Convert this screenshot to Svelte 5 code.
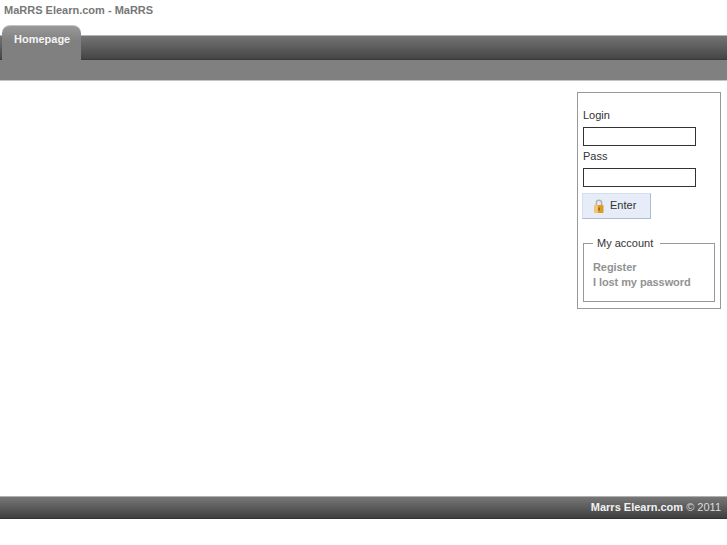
<script>
  const links = ['Register', 'I lost my password'];
</script>

<div class="page">
  <h1 class="title">MaRRS Elearn.com - MaRRS</h1>

  <nav class="menu">
    <a class="tab" href="#home">Homepage</a>
  </nav>
  <div class="subbar"></div>

  <main class="content">
    <aside class="side">
      <form class="login">
        <label for="login">Login</label>
        <input id="login" type="text" />
        <label for="pass">Pass</label>
        <input id="pass" type="password" />
        <button type="button" class="enter">
          <svg width="10" height="14" viewBox="0 0 10 14" aria-hidden="true">
            <path d="M2.4 6.5V3.8a2.6 2.6 0 0 1 5.2 0v2.7" fill="none" stroke="#b5b2a4" stroke-width="1.5" />
            <rect x="0.5" y="6" width="9" height="8" rx="0.8" fill="#dd9a2c" />
            <rect x="0.5" y="6" width="3.5" height="8" rx="0.8" fill="#f2c768" />
            <rect x="4.4" y="8.5" width="1.4" height="3" fill="#8d5c12" />
          </svg>
          <span>Enter</span>
        </button>
      </form>

      <fieldset class="account">
        <legend>My account</legend>
        {#each links as link}
          <a href="#{link}">{link}</a>
        {/each}
      </fieldset>
    </aside>
  </main>

  <footer class="foot"><b>Marrs Elearn.com</b> © 2011</footer>
</div>

<style>
  :global(body) {
    margin: 0;
    background: #fff;
  }

  .page {
    width: 727px;
    height: 545px;
    overflow: hidden;
    font-family: "Liberation Sans", Arial, sans-serif;
    font-size: 11px;
    color: #333;
  }

  .title {
    margin: 0;
    height: 25px;
    padding: 4px 0 0 4px;
    box-sizing: border-box;
    font-size: 11px;
    line-height: 13px;
    font-weight: bold;
    color: #777;
  }

  .menu {
    height: 35px;
    padding-left: 2px;
    box-sizing: border-box;
    background: linear-gradient(#fff 0, #fff 10px, #b4b4b4 10px, #b4b4b4 11px, #747474 11px, #454545 34px, #3a3a3a 34px);
  }

  .tab {
    display: block;
    width: 79px;
    height: 35px;
    box-sizing: border-box;
    padding: 7px 0 0 12px;
    border-radius: 8px 8px 0 0;
    border-top: 1px solid #c4c4c4;
    background: linear-gradient(#999, #808080 45%, #808080);
    color: #f4f4f4;
    font-weight: bold;
    line-height: 13px;
    text-decoration: none;
  }

  .subbar {
    height: 21px;
    background: #808080;
    border-bottom: 1px solid #c4c4c4;
    box-sizing: border-box;
  }

  .content {
    height: 415px;
    padding: 11px 6px 0 0;
    box-sizing: border-box;
    display: flex;
    justify-content: flex-end;
  }

  .side {
    width: 144px;
    height: 217px;
    box-sizing: border-box;
    border: 1px solid #999;
    padding: 16px 5px 0;
  }

  .login {
    display: flex;
    flex-direction: column;
    align-items: flex-start;
  }

  label {
    line-height: 13px;
    color: #333;
  }

  input {
    width: 113px;
    height: 19px;
    box-sizing: border-box;
    margin: 5px 0 4px;
    border: 1px solid #333;
    background: #fff;
    padding: 0;
  }

  .enter {
    display: flex;
    align-items: center;
    gap: 6px;
    width: 69px;
    height: 26px;
    margin: 2px 0 0 -1px;
    padding: 0 0 0 11px;
    border: 1px solid #d5deeb;
    border-right-color: #afbbce;
    border-bottom-color: #afbbce;
    background: #e6edf8;
    font: inherit;
    color: #333;
    box-sizing: border-box;
  }

  .enter span {
    margin-top: -2px;
  }

  .account {
    margin: 18px 0 0;
    padding: 10px 9px 0;
    width: 132px;
    height: 65px;
    box-sizing: border-box;
    border: 1px solid #999;
    display: flex;
    flex-direction: column;
  }

  legend {
    padding: 0 7px 0 4px;
    margin-left: 0;
    line-height: 13px;
    color: #333;
  }

  .account a {
    color: #929292;
    font-weight: bold;
    text-decoration: none;
    line-height: 15px;
    letter-spacing: -0.08px;
  }

  .foot {
    height: 23px;
    padding-right: 6px;
    box-sizing: border-box;
    background: linear-gradient(#b0b0b0 0, #b0b0b0 1px, #777 1px, #3f3f3f 22px, #333 22px);
    color: #ddd;
    text-align: right;
    line-height: 23px;
  }

  .foot b {
    color: #f2f2f2;
  }
</style>
